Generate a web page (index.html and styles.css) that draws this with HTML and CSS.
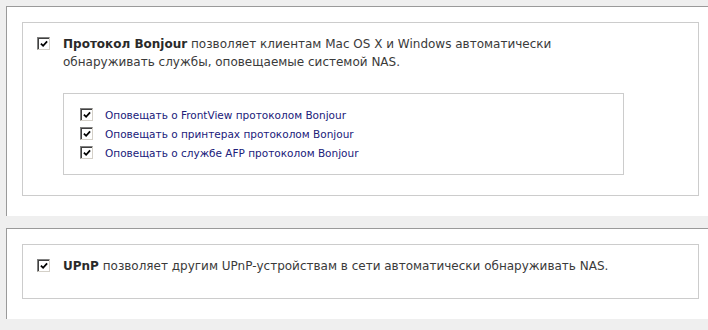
FILE: index.html
```html
<!DOCTYPE html>
<html lang="ru">
<head>
    <meta charset="UTF-8">
    <title>Bonjour / UPnP</title>
    <link rel="stylesheet" href="styles.css">
</head>
<body>
    <!-- Bonjour -->
    <div class="panel">
        <div class="group">
            <div class="option">
                <span class="check"><svg viewBox="0 0 9 9"><path d="M1 4 L3.5 6.5 L8 1.5"/></svg></span>
                <p class="narrow"><b>Протокол Bonjour</b> позволяет клиентам Mac OS X и Windows автоматически обнаруживать службы, оповещаемые системой NAS.</p>
            </div>
            <div class="sub-box">
                <div class="sub-item">
                    <span class="check"><svg viewBox="0 0 9 9"><path d="M1 4 L3.5 6.5 L8 1.5"/></svg></span>
                    <span>Оповещать о FrontView протоколом Bonjour</span>
                </div>
                <div class="sub-item">
                    <span class="check"><svg viewBox="0 0 9 9"><path d="M1 4 L3.5 6.5 L8 1.5"/></svg></span>
                    <span>Оповещать о принтерах протоколом Bonjour</span>
                </div>
                <div class="sub-item">
                    <span class="check"><svg viewBox="0 0 9 9"><path d="M1 4 L3.5 6.5 L8 1.5"/></svg></span>
                    <span>Оповещать о службе AFP протоколом Bonjour</span>
                </div>
            </div>
        </div>
    </div>

    <!-- UPnP -->
    <div class="panel">
        <div class="group group-single">
            <div class="option">
                <span class="check"><svg viewBox="0 0 9 9"><path d="M1 4 L3.5 6.5 L8 1.5"/></svg></span>
                <p><b>UPnP</b> позволяет другим UPnP-устройствам в сети автоматически обнаруживать NAS.</p>
            </div>
        </div>
    </div>
</body>
</html>
```

FILE: styles.css
```css
body {
    margin: 0;
    padding: 6px 0 0 6px;
    background-color: #efefef;
    font-family: "DejaVu Sans", Verdana, sans-serif;
    font-size: 12px;
    color: #3a3a3a;
}

.panel {
    width: 677px;
    background-color: #fff;
    border-top: 1px solid #9a9a9a;
    border-left: 1px solid #9a9a9a;
    padding: 15px 15px 20px 15px;
    margin-bottom: 12px;
}

.group {
    border: 1px solid #cccccc;
    padding: 12px 0 20px 14px;
}

.group-single {
    padding-bottom: 23px;
}

.option {
    display: flex;
    align-items: flex-start;
}

.option .check {
    margin-top: 2px;
    margin-right: 13px;
}

.option p {
    margin: 0;
    line-height: 18px;
    flex: 1;
}

.option p.narrow {
    flex: none;
    width: 500px;
}

.option b {
    color: #2a2a2a;
}

/* classic inset checkbox */
.check {
    flex: none;
    display: inline-flex;
    align-items: center;
    justify-content: center;
    box-sizing: border-box;
    width: 13px;
    height: 13px;
    background-color: #fff;
    border-top: 1px solid #808080;
    border-left: 1px solid #808080;
    border-right: 1px solid #d4d0c8;
    border-bottom: 1px solid #d4d0c8;
    box-shadow: inset 1px 1px 0 #404040;
}

.check svg {
    width: 8px;
    height: 8px;
    margin: 1px 0 0 1px;
}

.check path {
    fill: none;
    stroke: #000;
    stroke-width: 2;
}

.sub-box {
    width: 527px;
    margin: 22px 0 0 26px;
    border: 1px solid #cccccc;
    padding: 11px 16px 12px 16px;
}

.sub-item {
    display: flex;
    align-items: center;
    height: 19px;
    font-size: 10.5px;
    color: #20207a;
}

.sub-item .check {
    margin-right: 12px;
}
```
